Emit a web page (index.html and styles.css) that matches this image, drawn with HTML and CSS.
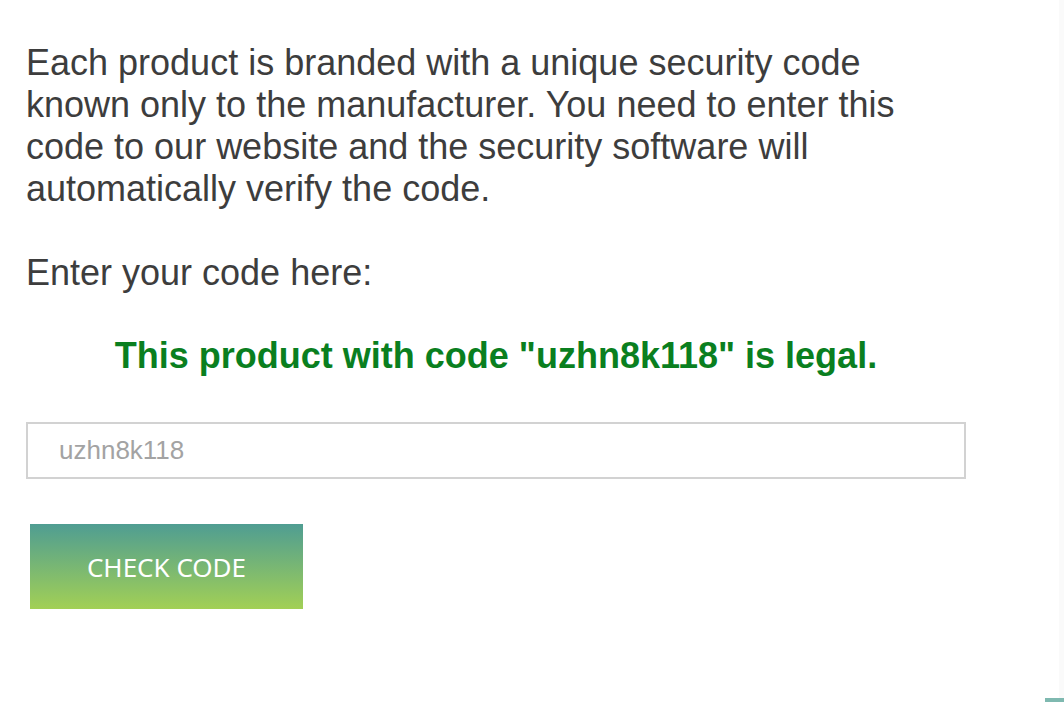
FILE: index.html
```html
<!DOCTYPE html>
<html lang="en">
<head>
  <meta charset="UTF-8" />
  <meta name="viewport" content="width=device-width, initial-scale=1.0" />
  <title>Check Code</title>
  <link rel="stylesheet" href="styles.css">
</head>
<body>
  <div class="container">
    <p class="intro">Each product is branded with a unique security code known only to the manufacturer. You need to enter this code to our website and the security software will automatically verify the code.</p>
    <p class="label">Enter your code here:</p>
    <p class="result">This product with code "uzhn8k118" is legal.</p>
    <form class="check-form">
      <input type="text" name="code" placeholder="uzhn8k118" />
      <button type="submit">CHECK CODE</button>
    </form>
  </div>
  <div class="side-strip"></div>
  <div class="corner-tab"></div>
</body>
</html>
```

FILE: styles.css
```css
body {
  margin: 0;
  font-family: "Liberation Sans", Arial, sans-serif;
  background: #fff;
  color: #3d3d3d;
}
.container {
  width: 940px;
  padding: 42px 0 0 26px;
}
.intro {
  font-size: 36px;
  line-height: 42px;
  margin: 0;
  max-width: 880px;
}
.label {
  font-size: 36px;
  line-height: 42px;
  margin: 42px 0 0;
}
.result {
  text-align: center;
  color: #0a7f1f;
  font-weight: bold;
  font-size: 36px;
  line-height: 42px;
  margin: 41px 0 0;
}
.check-form {
  margin-top: 45px;
}
.check-form input {
  display: block;
  box-sizing: border-box;
  width: 940px;
  height: 57px;
  border: 2px solid #d2d2d2;
  padding: 0 31px;
  font-family: "Liberation Sans", Arial, sans-serif;
  font-size: 26px;
  color: #a3a3a3;
  outline: none;
}
.check-form input::placeholder {
  color: #a3a3a3;
}
.check-form button {
  display: block;
  margin: 45px 0 0 4px;
  width: 273px;
  height: 85px;
  border: none;
  background: linear-gradient(to bottom, #4f9d92, #a2d055);
  color: #fff;
  font-family: "Noto Sans", "Open Sans", sans-serif;
  font-size: 26px;
  cursor: pointer;
}
.side-strip {
  position: fixed;
  top: 0;
  right: 0;
  width: 5px;
  height: 100%;
  background: #fafafa;
}
.corner-tab {
  position: fixed;
  right: 0;
  bottom: 0;
  width: 19px;
  height: 4px;
  background: #7fb9b0;
}
```
